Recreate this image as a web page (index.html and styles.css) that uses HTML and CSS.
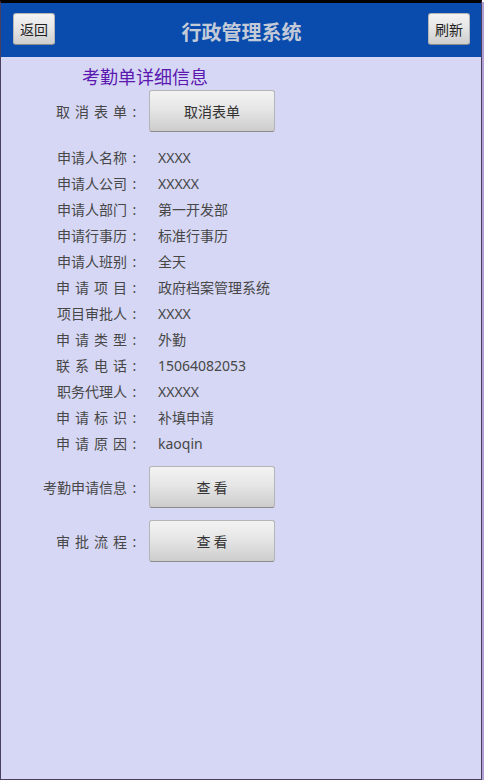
FILE: index.html
```html
<!DOCTYPE html>
<html lang="zh-CN">
  <head>
    <meta charset="UTF-8" />
    <meta name="viewport" content="width=device-width, initial-scale=1.0" />
    <title>行政管理系统</title>
    <link rel="stylesheet" href="styles.css">
  </head>
  <body>
    <div class="window">
      <div class="header">
        <button class="btn btn-small">返回</button>
        <div class="title">行政管理系统</div>
        <button class="btn btn-small">刷新</button>
      </div>

      <div class="content">
        <div class="subtitle">考勤单详细信息</div>

        <div class="row row-btn">
          <span class="label"><span class="wide">取消表单</span><span class="colon">:</span></span>
          <button class="btn btn-big">取消表单</button>
        </div>

        <div class="rows">
          <div class="row"><span class="label">申请人名称<span class="colon">:</span></span><span class="value">XXXX</span></div>
          <div class="row"><span class="label">申请人公司<span class="colon">:</span></span><span class="value">XXXXX</span></div>
          <div class="row"><span class="label">申请人部门<span class="colon">:</span></span><span class="value">第一开发部</span></div>
          <div class="row"><span class="label">申请行事历<span class="colon">:</span></span><span class="value">标准行事历</span></div>
          <div class="row"><span class="label">申请人班别<span class="colon">:</span></span><span class="value">全天</span></div>
          <div class="row"><span class="label"><span class="wide">申请项目</span><span class="colon">:</span></span><span class="value">政府档案管理系统</span></div>
          <div class="row"><span class="label">项目审批人<span class="colon">:</span></span><span class="value">XXXX</span></div>
          <div class="row"><span class="label"><span class="wide">申请类型</span><span class="colon">:</span></span><span class="value">外勤</span></div>
          <div class="row"><span class="label"><span class="wide">联系电话</span><span class="colon">:</span></span><span class="value">15064082053</span></div>
          <div class="row"><span class="label">职务代理人<span class="colon">:</span></span><span class="value">XXXXX</span></div>
          <div class="row"><span class="label"><span class="wide">申请标识</span><span class="colon">:</span></span><span class="value">补填申请</span></div>
          <div class="row"><span class="label"><span class="wide">申请原因</span><span class="colon">:</span></span><span class="value">kaoqin</span></div>
        </div>

        <div class="row row-btn row-view">
          <span class="label">考勤申请信息<span class="colon">:</span></span>
          <button class="btn btn-big">查 看</button>
        </div>
        <div class="row row-btn row-flow">
          <span class="label"><span class="wide">审批流程</span><span class="colon">:</span></span>
          <button class="btn btn-big">查 看</button>
        </div>
      </div>
    </div>
  </body>
</html>
```

FILE: styles.css
```css
body {
  margin: 0;
  background: #ffffff;
  font-family: "Noto Sans", "Noto Sans CJK SC", sans-serif;
}

.window {
  box-sizing: border-box;
  width: 482px;
  height: 780px;
  border-top: 3px solid #000;
  border-left: 1px solid #4a3f5e;
  border-right: 1px solid #4a3f5e;
  border-bottom: 1px solid #4a3f5e;
  background: #d6d7f5;
  box-shadow: 2px 2px 0 #b09fd2;
}

.header {
  height: 54px;
  background: #0a4bae;
  display: flex;
  align-items: center;
  justify-content: space-between;
  padding: 0 11px 0 12px;
}

.title {
  font-size: 20px;
  font-weight: bold;
  color: #c4cbd8;
  padding-top: 2px;
}

.btn {
  font-family: "Noto Sans CJK SC", sans-serif;
  background: linear-gradient(#f3f3f3, #e6e6e6 45%, #cdcdcd);
  border: 1px solid #b5b5b5;
  border-bottom-color: #8c8c8c;
  border-radius: 3px;
  color: #222;
  padding: 0;
  cursor: pointer;
}

.btn-small {
  width: 42px;
  height: 32px;
  font-size: 14px;
  margin-top: -3px;
}

.content {
  padding-top: 8px;
  color: #474747;
  font-size: 14px;
}

.subtitle {
  font-size: 18px;
  line-height: 24px;
  color: #5b19b0;
  padding-left: 81px;
}

.row {
  display: flex;
  align-items: center;
  height: 26px;
}

.row-btn {
  height: 41px;
  margin-top: 1px;
}

.rows {
  margin-top: 13px;
}

.row-view {
  margin-top: 10px;
}

.row-flow {
  margin-top: 13px;
}

.label {
  width: 141px;
  text-align: right;
  white-space: nowrap;
}

.wide {
  letter-spacing: 5px;
  margin-right: -5px;
}

.colon {
  display: inline-block;
  width: 15px;
  text-align: center;
  letter-spacing: 0;
}

.value {
  margin-left: 16px;
}

.btn-big {
  width: 126px;
  height: 42px;
  margin-left: 7px;
  font-size: 14px;
  color: #333;
}
```
